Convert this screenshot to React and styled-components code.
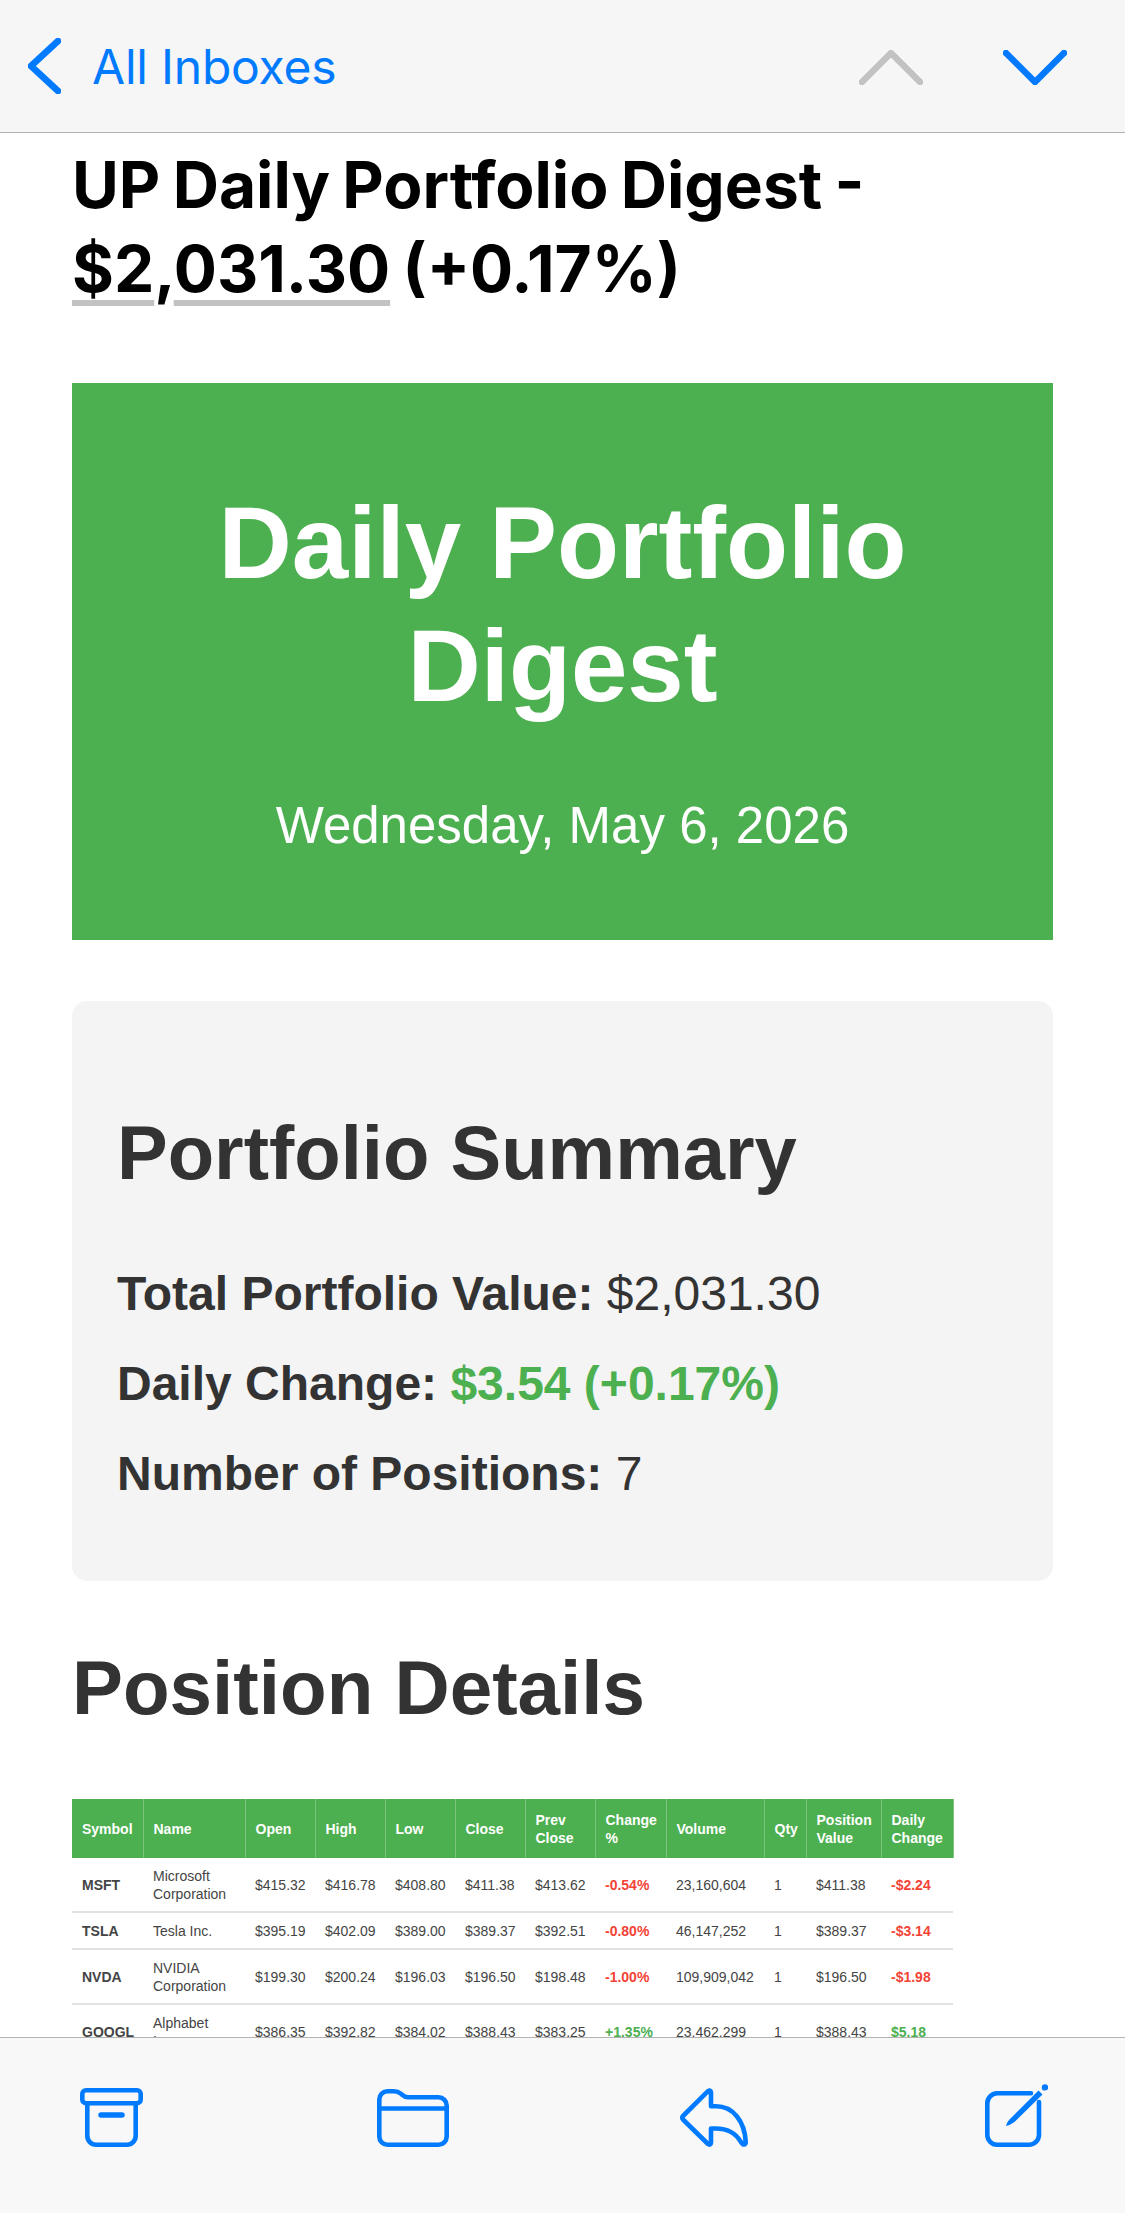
import React from "react";
import styled, { createGlobalStyle } from "styled-components";

const blue = "#007aff";

const positions = [
  { symbol: "MSFT", name: "Microsoft Corporation", open: "$415.32", high: "$416.78", low: "$408.80", close: "$411.38", prev: "$413.62", pct: "-0.54%", volume: "23,160,604", qty: 1, value: "$411.38", change: "-$2.24" },
  { symbol: "TSLA", name: "Tesla Inc.", open: "$395.19", high: "$402.09", low: "$389.00", close: "$389.37", prev: "$392.51", pct: "-0.80%", volume: "46,147,252", qty: 1, value: "$389.37", change: "-$3.14" },
  { symbol: "NVDA", name: "NVIDIA Corporation", open: "$199.30", high: "$200.24", low: "$196.03", close: "$196.50", prev: "$198.48", pct: "-1.00%", volume: "109,909,042", qty: 1, value: "$196.50", change: "-$1.98" },
  { symbol: "GOOGL", name: "Alphabet\nInc.", open: "$386.35", high: "$392.82", low: "$384.02", close: "$388.43", prev: "$383.25", pct: "+1.35%", volume: "23,462,299", qty: 1, value: "$388.43", change: "$5.18", up: true },
];

const columns = [
  ["Symbol", 71],
  ["Name", 102],
  ["Open", 70],
  ["High", 70],
  ["Low", 70],
  ["Close", 70],
  ["Prev Close", 70],
  ["Change %", 71],
  ["Volume", 98],
  ["Qty", 42],
  ["Position Value", 75],
  ["Daily Change", 72],
];

export default function App() {
  return (
    <>
      <GlobalStyle />
      <Screen>
        <TopBar>
          <BackLink>
            <svg width="33" height="56" viewBox="0 0 33 56">
              <Chevron points="30,3 3,28 30,53" $color={blue} />
            </svg>
            <BackLabel>All Inboxes</BackLabel>
          </BackLink>
          <Pager>
            <svg width="64" height="35" viewBox="0 0 64 35">
              <Chevron points="3,32 32,3 61,32" $color="#c2c2c2" />
            </svg>
            <svg width="64" height="35" viewBox="0 0 64 35">
              <Chevron points="3,3 32,32 61,3" $color={blue} />
            </svg>
          </Pager>
        </TopBar>

        <Mail>
          <Subject>
            UP Daily Portfolio Digest - <DataLink>$2</DataLink>,<DataLink>031.30</DataLink> (+0.17%)
          </Subject>

          <Banner>
            <BannerTitle>Daily Portfolio Digest</BannerTitle>
            <BannerDate>Wednesday, May 6, 2026</BannerDate>
          </Banner>

          <Summary>
            <SummaryTitle>Portfolio Summary</SummaryTitle>
            <SummaryLine><strong>Total Portfolio Value:</strong> $2,031.30</SummaryLine>
            <SummaryLine><strong>Daily Change:</strong> <Gain>$3.54 (+0.17%)</Gain></SummaryLine>
            <SummaryLine><strong>Number of Positions:</strong> 7</SummaryLine>
          </Summary>

          <SectionTitle>Position Details</SectionTitle>

          <Table>
            <colgroup>
              {columns.map(([label, width]) => <Col key={label} $width={width} />)}
            </colgroup>
            <thead>
              <tr>
                {columns.map(([label]) => <Th key={label}>{label}</Th>)}
              </tr>
            </thead>
            <tbody>
              {positions.map((p) => (
                <tr key={p.symbol}>
                  <Td $bold>{p.symbol}</Td>
                  <NameCell>{p.name}</NameCell>
                  <Td>{p.open}</Td>
                  <Td>{p.high}</Td>
                  <Td>{p.low}</Td>
                  <Td>{p.close}</Td>
                  <Td>{p.prev}</Td>
                  <Td $bold $color={p.up ? "#4caf50" : "#f44336"}>{p.pct}</Td>
                  <Td>{p.volume}</Td>
                  <Td>{p.qty}</Td>
                  <Td>{p.value}</Td>
                  <Td $bold $color={p.up ? "#4caf50" : "#f44336"}>{p.change}</Td>
                </tr>
              ))}
            </tbody>
          </Table>
        </Mail>

        <BottomBar>
          <svg width="63" height="59" viewBox="0 0 63 59">
            <IconShape d="M6 2.3H57A3.7 3.7 0 0 1 60.7 6V11.5A3.7 3.7 0 0 1 57 15.2H6A3.7 3.7 0 0 1 2.3 11.5V6A3.7 3.7 0 0 1 6 2.3Z" />
            <IconShape d="M7.3 15.2V48A8.7 8.7 0 0 0 16 56.7H47A8.7 8.7 0 0 0 55.7 48V15.2" />
            <IconShape d="M21 27H42" $wide />
          </svg>
          <svg width="72" height="58" viewBox="0 0 72 58">
            <IconShape d="M2.3 10.5A8.2 8.2 0 0 1 10.5 2.3H17C20.5 2.3 22 3.2 24 4.8C26 6.5 27.5 8.3 31 8.3H61.5A8.2 8.2 0 0 1 69.7 16.5V47.5A8.2 8.2 0 0 1 61.5 55.7H10.5A8.2 8.2 0 0 1 2.3 47.5ZM2.3 19.5H69.7" />
          </svg>
          <svg width="68" height="59" viewBox="0 0 68 59">
            <IconShape d="M31 4.5C31 2.5 29.5 2 28 3.2L3.5 27.5C2 29 2 30.5 3.5 32L28 56C29.5 57.2 31 56.5 31 54.5V40.5H36C47 40.5 55 44 61 54C63 57.5 66 57.5 65.7 53.5C64.5 33 53 18.3 36 18.3H31Z" />
          </svg>
          <svg width="63" height="63" viewBox="0 0 63 63">
            <IconShape d="M46 9.3H12A10 10 0 0 0 2.3 19.3V51A10 10 0 0 0 12 60.7H44A10 10 0 0 0 54 51V18" />
            <IconFill d="M21 42C22 38 24 36 26 34L53.5 6.5L57.5 10.5L30 37.5C27 40 25 41 21 42Z" />
            <IconFill as="circle" cx="60" cy="3.4" r="3.2" />
          </svg>
        </BottomBar>
      </Screen>
    </>
  );
}

const GlobalStyle = createGlobalStyle`
  html, body {
    margin: 0;
    padding: 0;
    background: #fff;
  }
  body {
    font-family: "Liberation Sans", Arial, sans-serif;
  }
`;

const Screen = styled.div`
  width: 1125px;
  height: 2213px;
  display: flex;
  flex-direction: column;
  overflow: hidden;
`;

const TopBar = styled.header`
  flex: none;
  height: 132px;
  box-sizing: content-box;
  padding: 0 58px 0 28px;
  display: flex;
  align-items: center;
  justify-content: space-between;
  background: #f6f6f6;
  border-bottom: 1px solid #b2b2b2;
`;

const BackLink = styled.div`
  display: flex;
  align-items: center;
  gap: 31px;
`;

const BackLabel = styled.span`
  font-family: Inter, sans-serif;
  font-size: 48px;
  letter-spacing: -0.2px;
  color: ${blue};
`;

const Pager = styled.div`
  display: flex;
  gap: 80px;
  padding-top: 3px;
`;

const Chevron = styled.polyline`
  fill: none;
  stroke: ${(p) => p.$color};
  stroke-width: 6.5;
  stroke-linecap: round;
  stroke-linejoin: round;
`;

const Mail = styled.main`
  flex: 1;
  min-height: 0;
  overflow: hidden;
  padding: 0 72px;
`;

const Subject = styled.h1`
  margin: 0;
  padding-top: 10px;
  font-family: Inter, sans-serif;
  font-size: 64px;
  font-weight: 700;
  word-spacing: -2.8px;
  line-height: 84px;
  color: #000;
`;

const DataLink = styled.span`
  text-decoration: underline;
  text-decoration-color: #c2c2c2;
  text-decoration-thickness: 6px;
  text-underline-offset: 8px;
  text-decoration-skip-ink: none;
`;

const Banner = styled.section`
  margin-top: 72px;
  height: 557px;
  box-sizing: border-box;
  padding-top: 99px;
  background: #4caf50;
  color: #fff;
  text-align: center;
`;

const BannerTitle = styled.div`
  width: 760px;
  margin: 0 auto;
  font-size: 101.5px;
  font-weight: 700;
  line-height: 123px;
`;

const BannerDate = styled.div`
  margin-top: 69px;
  font-size: 51px;
  line-height: 58px;
`;

const Summary = styled.section`
  margin-top: 61px;
  height: 580px;
  box-sizing: border-box;
  padding: 106px 45px 0;
  background: #f4f4f4;
  border-radius: 15px;
  color: #333;
`;

const SummaryTitle = styled.h2`
  margin: 0 0 50px;
  font-size: 76px;
  font-weight: 700;
  line-height: 92px;
`;

const SummaryLine = styled.p`
  margin: 0;
  font-size: 48px;
  line-height: 90px;
`;

const Gain = styled.strong`
  color: #4caf50;
`;

const SectionTitle = styled.h2`
  margin: 63px 0 0;
  font-size: 76.4px;
  font-weight: 700;
  line-height: 88px;
  color: #333;
`;

const Table = styled.table`
  width: 881px;
  margin-top: 67px;
  table-layout: fixed;
  border-collapse: collapse;
  font-size: 14px;
  line-height: 18px;
  color: #444;
`;

const Col = styled.col`
  width: ${(p) => p.$width}px;
`;

const Th = styled.th`
  padding: 11.5px 10px;
  background: #4caf50;
  border-right: 1px solid #7cc47f;
  color: #fff;
  font-weight: 700;
  text-align: left;
`;

const Td = styled.td`
  padding: 8.5px 10px;
  border-bottom: 2px solid #e2e2e2;
  color: ${(p) => p.$color || "#444"};
  font-weight: ${(p) => (p.$bold ? 700 : 400)};
  text-align: left;
`;

const NameCell = styled(Td)`
  white-space: pre-line;
`;

const BottomBar = styled.footer`
  position: relative;
  z-index: 1;
  flex: none;
  height: 176px;
  box-sizing: border-box;
  padding: 0 0 66px 80px;
  display: grid;
  grid-template-columns: 297px 303px 305px auto;
  align-items: end;
  background: #f8f8f8;
  border-top: 1px solid #b2b2b2;
`;

const IconShape = styled.path`
  fill: none;
  stroke: ${blue};
  stroke-width: ${(p) => (p.$wide ? 5.5 : 4.6)};
  stroke-linecap: round;
  stroke-linejoin: round;
`;

const IconFill = styled.path`
  fill: ${blue};
`;
